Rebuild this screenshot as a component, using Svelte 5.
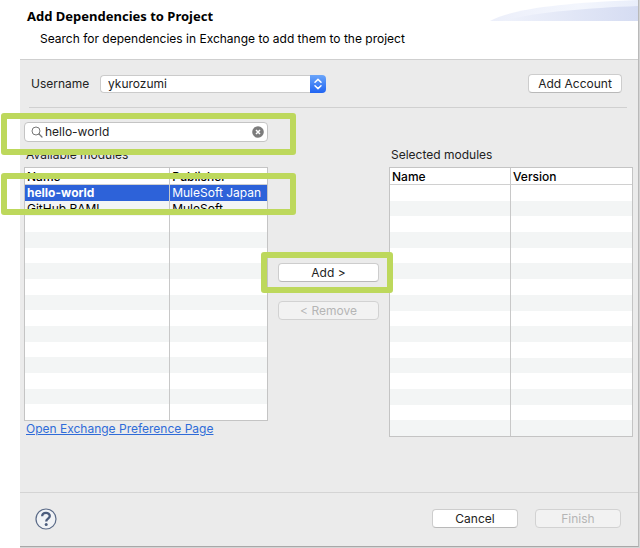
<script>
  let account = $state('ykurozumi');
  let query = $state('hello-world');
  let selected = $state(0);
  const modules = [
    { name: 'hello-world', publisher: 'MuleSoft Japan' },
    { name: 'GitHub RAML', publisher: 'MuleSoft' }
  ];
  const availableBlank = Array.from({ length: 13 });
  const chosenBlank = Array.from({ length: 16 });
</script>

<div class="page">
  <main class="dialog">
    <header>
      <h1>Add Dependencies to Project</h1>
      <p>Search for dependencies in Exchange to add them to the project</p>
      <svg class="swoosh" viewBox="0 0 148 21" aria-hidden="true">
        <defs>
          <linearGradient id="outer" x1="0" x2="1">
            <stop offset="0" stop-color="#eceffa" />
            <stop offset="0.6" stop-color="#f3f6fd" />
            <stop offset="1" stop-color="#e9eefa" />
          </linearGradient>
          <linearGradient id="inner" x1="0" x2="1">
            <stop offset="0" stop-color="#eff2fb" />
            <stop offset="1" stop-color="#d5dcf2" />
          </linearGradient>
        </defs>
        <path d="M0 21C20 10 65 3 148 0V21Z" fill="url(#outer)" />
        <path d="M12 21C40 13 95 8 148 6V21Z" fill="url(#inner)" />
      </svg>
    </header>

    <div class="account">
      <label for="user">Username</label>
      <div class="combo">
        <select id="user" bind:value={account}>
          <option>ykurozumi</option>
        </select>
        <svg viewBox="0 0 16 18" aria-hidden="true">
          <defs>
            <linearGradient id="blue" x2="0" y2="1">
              <stop offset="0" stop-color="#6aa5fa" />
              <stop offset="1" stop-color="#2064f2" />
            </linearGradient>
          </defs>
          <path d="M0 0H12Q16 0 16 4V14Q16 18 12 18H0Z" fill="url(#blue)" />
          <path d="M5 7.2 8 4.4 11 7.2M5 10.8 8 13.6 11 10.8" fill="none" stroke="#fff" stroke-width="1.5" stroke-linecap="round" stroke-linejoin="round" />
        </svg>
      </div>
      <button class="btn">Add Account</button>
    </div>

    <div class="columns">
      <section class="available">
        <div class="search">
          <svg width="12" height="12" viewBox="0 0 12 12" aria-hidden="true">
            <circle cx="5" cy="5" r="4" fill="none" stroke="#777" />
            <path d="M8 8 11 11" stroke="#777" stroke-width="1.2" stroke-linecap="round" />
          </svg>
          <input aria-label="Search modules" bind:value={query} />
          <button class="clear" aria-label="Clear search" onclick={() => (query = '')}>
            <svg width="12" height="12" viewBox="0 0 12 12" aria-hidden="true">
              <circle cx="6" cy="6" r="5.8" fill="#7c7c7c" />
              <path d="M4 4 8 8M8 4 4 8" stroke="#fff" stroke-width="1.5" />
            </svg>
          </button>
          <span class="mark field-mark"></span>
        </div>
        <h2 id="available">Available modules</h2>
        <div class="list">
          <table class="short" aria-labelledby="available">
            <thead><tr><th class="wide">Name</th><th>Publisher</th></tr></thead>
            <tbody>
              {#each modules as item, i}
                <tr class:selected={selected === i} onclick={() => (selected = i)}>
                  <td>{item.name}</td><td>{item.publisher}</td>
                </tr>
              {/each}
              {#each availableBlank as _}<tr><td></td><td></td></tr>{/each}
            </tbody>
          </table>
          <span class="mark row-mark"></span>
        </div>
        <a href="#preferences">Open Exchange Preference Page</a>
      </section>

      <div class="actions">
        <div class="add">
          <button class="btn">Add &gt;</button>
          <span class="mark button-mark"></span>
        </div>
        <button class="btn" disabled>&lt; Remove</button>
      </div>

      <section class="chosen">
        <h2 id="chosen">Selected modules</h2>
        <table class="tall" aria-labelledby="chosen">
          <thead><tr><th>Name</th><th>Version</th></tr></thead>
          <tbody>
            {#each chosenBlank as _}<tr><td></td><td></td></tr>{/each}
          </tbody>
        </table>
      </section>
    </div>

    <footer>
      <button class="help" aria-label="Help">
        <svg width="22" height="22" viewBox="0 0 22 22" aria-hidden="true">
          <circle cx="11" cy="11" r="10" fill="#f1f3f6" stroke="#5b6b88" stroke-width="1.2" />
          <path d="M7.2 8.3C7.2 3.8 14.8 3.9 14.8 8.1C14.8 10.6 11.2 10.8 11.2 13.6" fill="none" stroke="#4c5d7d" stroke-width="2.3" />
          <circle cx="11.2" cy="16.6" r="1.5" fill="#4c5d7d" />
        </svg>
      </button>
      <button class="btn">Cancel</button>
      <button class="btn" disabled>Finish</button>
    </footer>
  </main>
</div>

<style>
  .page {
    box-sizing: border-box;
    min-height: 100vh;
    display: flex;
    padding: 0 1px 1px 20px;
    background: linear-gradient(90deg, #fff 20px, #d4d4d4 20px);
    font: 12px/16px Inter, "Liberation Sans", sans-serif;
    color: #222;
    overflow: hidden;
  }
  .page * { box-sizing: border-box; }
  .dialog {
    flex: 1;
    min-width: 0;
    display: flex;
    flex-direction: column;
    background: #ebebeb;
    border-right: 1px solid #b9b9b9;
    border-bottom: 1px solid #a8a8a8;
  }
  header {
    position: relative;
    height: 60px;
    padding: 8px 7px;
    background: #fff;
    border-bottom: 1px solid #cfcfcf;
    color: #000;
  }
  h1 {
    margin: 0;
    font: bold 13px/16px "Noto Sans", sans-serif;
  }
  header p { margin: 7px 13px; }
  .swoosh {
    position: absolute;
    top: 0;
    right: 0;
    width: 148px;
    height: 21px;
  }
  .account {
    display: flex;
    align-items: center;
    height: 48px;
    margin: 0 11px 0 9px;
    padding: 0 5px 0 2px;
    border-bottom: 1px solid #d0d0d0;
  }
  .account label { width: 69px; }
  .combo { display: flex; width: 226px; height: 18px; margin-right: auto; }
  .combo svg { width: 16px; height: 18px; flex: none; }
  select {
    appearance: none;
    flex: 1;
    min-width: 0;
    border: 1px solid #cbcbcb;
    border-right: 0;
    border-radius: 4px 0 0 4px;
    background: #fff;
    padding: 0 7px;
    font: inherit;
    color: inherit;
  }
  .btn {
    width: 100%;
    height: 19px;
    padding: 0;
    border: 1px solid #cdcdcd;
    border-bottom-color: #b9b9b9;
    border-radius: 4px;
    background: #fff;
    font: inherit;
    color: #222;
  }
  .btn:disabled {
    background: #f2f2f2;
    border-color: #d2d2d2;
    color: #b5b5b5;
  }
  .account .btn { width: 94px; }
  .columns {
    flex: 1;
    display: grid;
    grid-template-columns: 1fr 101px 1fr;
    column-gap: 10px;
    padding: 14px 5px 0 4px;
  }
  .search {
    position: relative;
    display: flex;
    align-items: center;
    height: 20px;
    padding: 0 3px 0 6px;
    border: 1px solid #c4c4c4;
    border-radius: 4px;
    background: #fff;
  }
  .search input {
    flex: 1;
    min-width: 0;
    padding: 0 2px;
    border: 0;
    outline: 0;
    background: none;
    font: inherit;
    color: inherit;
  }
  .clear, .help { display: flex; padding: 0; border: 0; background: none; }
  h2 {
    margin: 0;
    padding: 0 2px;
    font: inherit;
    line-height: 25px;
  }
  .chosen { padding-top: 20px; }
  .list { position: relative; }
  table {
    width: 100%;
    table-layout: fixed;
    border-spacing: 0;
    border: 1px solid #c4c4c4;
    background: #fff;
    color: #000;
  }
  .short { height: 254px; }
  .tall { height: 270px; }
  th, td {
    height: 15px;
    padding: 0 2px;
    line-height: 15px;
    white-space: nowrap;
    text-align: left;
  }
  th {
    height: 17px;
    font-weight: 500;
    border-bottom: 1px solid #d0d0d0;
  }
  th.wide { width: 60%; }
  th:first-child, td:first-child { border-right: 1px solid #c8c8c8; }
  tbody tr:nth-child(even) { background: #f3f5f5; }
  tbody tr.selected { background: #2d62d9; color: #fff; }
  tr.selected td:first-child { font-weight: bold; }
  a {
    display: block;
    padding: 0 2px;
    color: #2f6bd8;
  }
  .actions {
    display: flex;
    flex-direction: column;
    gap: 19px;
    padding-top: 141px;
  }
  .add { position: relative; display: flex; }
  .mark {
    position: absolute;
    border: 6px solid #bdd85c;
    border-radius: 3px;
    pointer-events: none;
  }
  .field-mark { inset: -10px -29px -14px -24px; }
  .row-mark { top: 6px; left: -23px; right: -28px; height: 42px; }
  .button-mark { inset: -11px -14px -11px -17px; }
  footer {
    display: flex;
    align-items: center;
    gap: 17px;
    height: 54px;
    padding: 0 17px 2px 15px;
    border-top: 1px solid #d4d4d4;
  }
  footer .btn { width: 86px; }
  .help { margin-right: auto; }
</style>
